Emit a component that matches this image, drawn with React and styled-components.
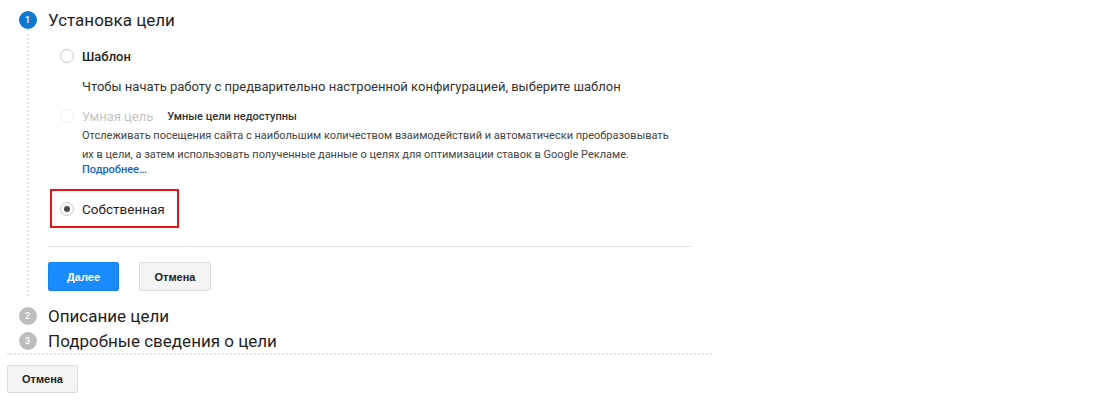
import React from "react";
import styled, { createGlobalStyle } from "styled-components";

const GlobalStyle = createGlobalStyle`
  body {
    margin: 0;
    background: #fff;
    font-family: Roboto, "Liberation Sans", Arial, sans-serif;
    color: #212121;
  }
`;

const Page = styled.div`
  width: 705px;
  padding: 10px 0 0 7px;
`;

const Step = styled.div`
  display: grid;
  grid-template-columns: 41px 1fr;
  margin-top: ${(p) => p.gap || 0}px;
`;

const Marker = styled.div`
  display: flex;
  flex-direction: column;
  align-items: center;
`;

const Circle = styled.div`
  width: 18px;
  height: 18px;
  margin-top: 1px;
  border-radius: 50%;
  background: ${(p) => (p.active ? "#0f78cf" : "#bdbdbd")};
  color: #fff;
  font-size: 9px;
  font-weight: 500;
  display: flex;
  align-items: center;
  justify-content: center;
  flex-shrink: 0;
`;

const Rail = styled.div`
  flex: 1;
  margin-bottom: -5px;
  border-left: 2px dotted #dedede;
`;

const StepTitle = styled.div`
  height: 20px;
  line-height: 20px;
  font-size: 17px;
  color: #1f1f1f;
`;

const OptionRow = styled.label`
  display: flex;
  align-items: center;
  height: 20px;
  padding-left: ${(p) => (p.flush ? 0 : 12)}px;
  margin-top: ${(p) => p.gap || 0}px;
  gap: 8px;
`;

const Radio = styled.span`
  width: 14px;
  height: 14px;
  box-sizing: border-box;
  border-radius: 50%;
  border: 1px solid ${(p) => (p.disabled ? "#f0f0f0" : "#c8c8c8")};
  background: #fff;
  display: flex;
  align-items: center;
  justify-content: center;
  flex-shrink: 0;
  &::after {
    content: "";
    display: ${(p) => (p.checked ? "block" : "none")};
    width: 6px;
    height: 6px;
    border-radius: 50%;
    background: #4a4a4a;
  }
`;

const OptionLabel = styled.span`
  font-size: 13px;
  font-weight: ${(p) => (p.strong ? 500 : 400)};
  color: ${(p) => (p.disabled ? "#c4c4c4" : "#1f1f1f")};
`;

const Note = styled.span`
  margin-left: 6px;
  font-size: 11px;
  font-weight: 500;
  color: #333;
`;

const Help = styled.p`
  margin: ${(p) => p.gap || 0}px 0 0 34px;
  font-size: ${(p) => (p.small ? 11 : 13)}px;
  line-height: ${(p) => (p.small ? 19 : 18)}px;
  color: ${(p) => (p.small ? "#444" : "#333")};
  white-space: nowrap;
`;

const MoreLink = styled.a`
  display: block;
  margin: 0 0 0 34px;
  font-size: 11px;
  line-height: 12px;
  font-weight: 500;
  color: #1565c0;
  text-decoration: none;
`;

const Highlight = styled.div`
  width: 129px;
  height: 39px;
  box-sizing: border-box;
  margin: 13px 0 0 2px;
  border: 2px solid #e8131a;
  display: flex;
  align-items: center;
  padding-left: 8px;
  ${OptionLabel} {
    font-size: 13.5px;
  }
`;

const Divider = styled.hr`
  width: 644px;
  margin: 18px 0 0;
  border: 0;
  border-top: 1px solid #e3e3e3;
`;

const Actions = styled.div`
  display: flex;
  gap: 20px;
  margin-top: 15px;
`;

const Button = styled.button`
  width: ${(p) => p.w || 72}px;
  height: ${(p) => p.h || 29}px;
  font-family: "Liberation Sans", Arial, sans-serif;
  font-size: 11px;
  font-weight: 700;
  border-radius: 2px;
  cursor: pointer;
  border: 1px solid ${(p) => (p.primary ? "#1584f5" : "#dcdcdc")};
  background: ${(p) => (p.primary ? "#1a8cff" : "#f4f4f4")};
  color: ${(p) => (p.primary ? "#fff" : "#222")};
`;

const Footer = styled.div`
  margin-top: 2px;
  border-top: 2px dotted #e6e6e6;
  padding-top: 10px;
`;

export default function App() {
  return (
    <>
      <GlobalStyle />
      <Page>
        <Step>
          <Marker>
            <Circle active>1</Circle>
            <Rail />
          </Marker>
          <div>
            <StepTitle>Установка цели</StepTitle>
            <OptionRow gap={16}>
              <Radio />
              <OptionLabel strong>Шаблон</OptionLabel>
            </OptionRow>
            <Help gap={12}>
              Чтобы начать работу с предварительно настроенной конфигурацией, выберите шаблон
            </Help>
            <OptionRow gap={10}>
              <Radio disabled />
              <OptionLabel disabled>Умная цель</OptionLabel>
              <Note>Умные цели недоступны</Note>
            </OptionRow>
            <Help small>
              Отслеживать посещения сайта с наибольшим количеством взаимодействий и автоматически преобразовывать
              <br />
              их в цели, а затем использовать полученные данные о целях для оптимизации ставок в Google Рекламе.
            </Help>
            <MoreLink href="#">Подробнее…</MoreLink>
            <Highlight>
              <OptionRow flush>
                <Radio checked />
                <OptionLabel>Собственная</OptionLabel>
              </OptionRow>
            </Highlight>
            <Divider />
            <Actions>
              <Button primary w={71}>Далее</Button>
              <Button>Отмена</Button>
            </Actions>
          </div>
        </Step>
        <Step gap={15}>
          <Marker>
            <Circle>2</Circle>
          </Marker>
          <StepTitle>Описание цели</StepTitle>
        </Step>
        <Step gap={5}>
          <Marker>
            <Circle>3</Circle>
          </Marker>
          <StepTitle>Подробные сведения о цели</StepTitle>
        </Step>
        <Footer>
          <Button w={71} h={28}>Отмена</Button>
        </Footer>
      </Page>
    </>
  );
}
